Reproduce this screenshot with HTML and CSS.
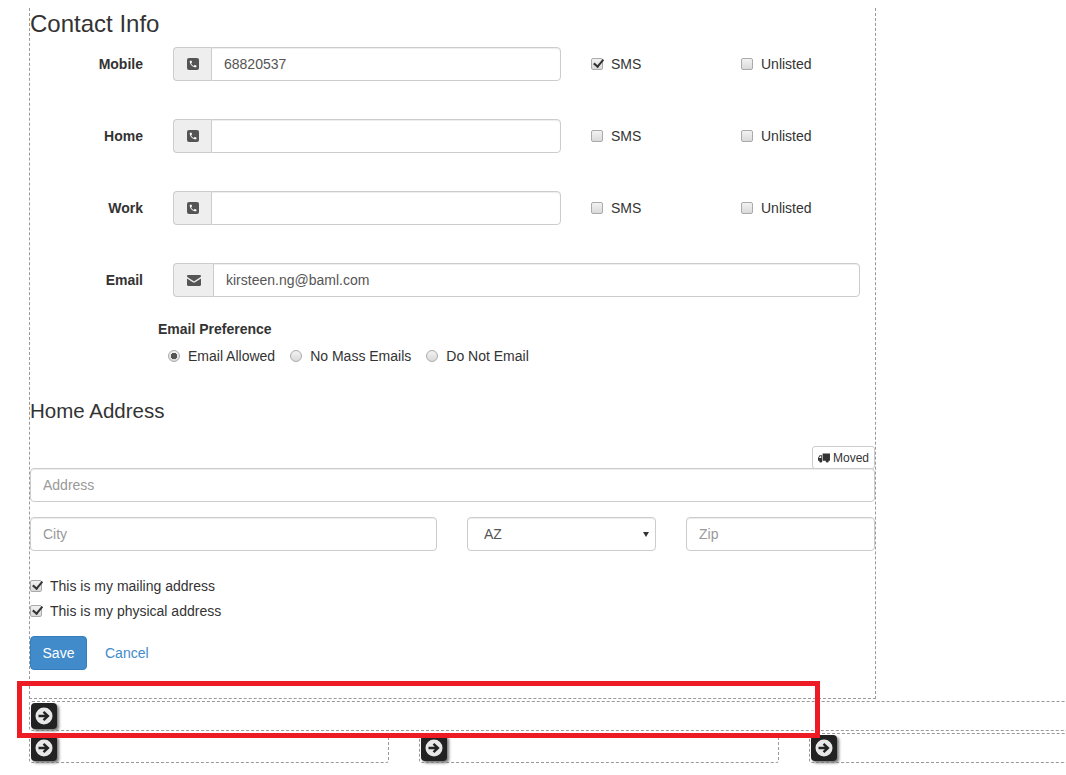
FILE: index.html
```html
<!DOCTYPE html>
<html lang="en">
<head>
<meta charset="utf-8">
<title>Contact Info</title>
<link rel="stylesheet" href="styles.css">
</head>
<body>
<svg class="defs" width="0" height="0" aria-hidden="true">
  <defs>
    <symbol id="phone" viewBox="0 0 12 12">
      <rect width="12" height="12" rx="2" fill="#555"/>
      <path transform="translate(1.6 1.6) scale(.37)" fill="#fff" d="M6.62 10.79c1.44 2.83 3.76 5.14 6.59 6.59l2.2-2.2c.27-.27.67-.36 1.02-.24 1.12.37 2.33.57 3.57.57.55 0 1 .45 1 1V20c0 .55-.45 1-1 1-9.39 0-17-7.61-17-17 0-.55.45-1 1-1h3.5c.55 0 1 .45 1 1 0 1.25.2 2.45.57 3.57.11.35.03.74-.25 1.02l-2.2 2.2z"/>
    </symbol>
    <symbol id="go" viewBox="0 0 26 26">
      <circle cx="13" cy="13" r="8.5" fill="#e8e8e8"/>
      <path d="M7.5 13h9M12.5 8.8l4.4 4.2-4.4 4.2" fill="none" stroke="#222" stroke-width="2.4"/>
    </symbol>
  </defs>
</svg>

<main class="panel">
  <h2 class="title">Contact Info</h2>

  <div class="contact-row">
    <label class="row-label">Mobile</label>
    <div class="group"><span class="addon"><svg class="ico"><use href="#phone"/></svg></span><input class="control joined" value="68820537"></div>
    <label class="check check-wide"><input type="checkbox" checked>SMS</label>
    <label class="check"><input type="checkbox">Unlisted</label>
  </div>
  <div class="contact-row">
    <label class="row-label">Home</label>
    <div class="group"><span class="addon"><svg class="ico"><use href="#phone"/></svg></span><input class="control joined"></div>
    <label class="check check-wide"><input type="checkbox">SMS</label>
    <label class="check"><input type="checkbox">Unlisted</label>
  </div>
  <div class="contact-row">
    <label class="row-label">Work</label>
    <div class="group"><span class="addon"><svg class="ico"><use href="#phone"/></svg></span><input class="control joined"></div>
    <label class="check check-wide"><input type="checkbox">SMS</label>
    <label class="check"><input type="checkbox">Unlisted</label>
  </div>
  <div class="contact-row email-row">
    <label class="row-label">Email</label>
    <div class="group group-wide"><span class="addon addon-wide"><svg class="ico-mail" viewBox="0 0 14 11"><path fill="#555" d="M1.2 0h11.6c.7 0 1.2.5 1.2 1.1 0 .5-.3.9-.7 1.2L7.6 6a1 1 0 0 1-1.2 0L.7 2.300C.3 2 0 1.600 0 1.100 0 .5.500 0 1.200 0zM0 3.400 5.800 7.200c.7.500 1.700.500 2.400 0L14 3.400v6.400c0 .7-.5 1.200-1.200 1.200H1.200C.5 11 0 10.500 0 9.800z"/></svg></span><input class="control joined" value="kirsteen.ng@baml.com"></div>
  </div>

  <div class="prefs">
    <div class="prefs-title">Email Preference</div>
    <div class="radios">
      <label class="radio"><input type="radio" name="pref" checked>Email Allowed</label>
      <label class="radio"><input type="radio" name="pref">No Mass Emails</label>
      <label class="radio"><input type="radio" name="pref">Do Not Email</label>
    </div>
  </div>

  <h3 class="subtitle">Home Address</h3>
  <div class="moved-bar">
    <button class="moved" type="button"><svg class="ico-truck" viewBox="0 0 13 10"><path fill="#333" d="M5 0h8v8H5zM4.300 2v6H0V5l1.700-3zM1 5h2.500V3H2.200z" fill-rule="evenodd"/><circle cx="3" cy="8.300" r="1.700" fill="#333"/><circle cx="10" cy="8.300" r="1.700" fill="#333"/></svg> Moved</button>
  </div>
  <input class="control full" placeholder="Address">
  <div class="city-grid">
    <input class="control" placeholder="City">
    <div class="select-wrap"><select class="control select"><option>AZ</option></select></div>
    <input class="control" placeholder="Zip">
  </div>
  <label class="address-check first"><input type="checkbox" checked>This is my mailing address</label>
  <label class="address-check"><input type="checkbox" checked>This is my physical address</label>
  <div class="actions">
    <button class="save" type="button">Save</button>
    <a class="cancel" href="#">Cancel</a>
  </div>
</main>

<section class="strip">
  <svg class="go-btn"><use href="#go"/></svg>
</section>
<section class="columns">
  <div class="col"><svg class="go-btn"><use href="#go"/></svg></div>
  <div class="col"><svg class="go-btn"><use href="#go"/></svg></div>
  <div class="col"><svg class="go-btn"><use href="#go"/></svg></div>
</section>

<div class="highlight"></div>
</body>
</html>
```

FILE: styles.css
```css
* { box-sizing: border-box; }
html, body { margin: 0; padding: 0; overflow: hidden; height: 775px; background: #fff; }
body {
  position: relative;
  font-family: "Liberation Sans", Arial, sans-serif;
  font-size: 14px;
  line-height: 20px;
  color: #333;
}
.defs { position: absolute; }

.panel {
  width: 847px;
  height: 691px;
  margin-left: 29px;
  border: 1px dashed #999;
  border-top: 0;
}
.title {
  margin: 8px 0 7px;
  font-size: 24px;
  font-weight: 400;
  line-height: 32px;
}
.contact-row { display: flex; align-items: center; height: 34px; margin-bottom: 38px; }
.email-row { margin-bottom: 22px; }
.row-label { width: 113px; margin-right: 30px; text-align: right; font-weight: 700; }

.group { display: flex; width: 388px; height: 34px; }
.group-wide { width: 687px; }
.addon {
  display: flex;
  align-items: center;
  justify-content: center;
  flex: 0 0 38px;
  background: #eee;
  border: 1px solid #ccc;
  border-right: 0;
  border-radius: 4px 0 0 4px;
}
.addon-wide { flex-basis: 40px; }
.ico { width: 12px; height: 12px; }
.ico-mail { width: 14px; height: 11px; }

.control {
  display: block;
  width: 100%;
  height: 34px;
  padding: 6px 12px;
  font: inherit;
  color: #555;
  background: #fff;
  border: 1px solid #ccc;
  border-radius: 4px;
  box-shadow: inset 0 1px 1px rgba(0, 0, 0, .075);
  outline: 0;
}
.control::placeholder { color: #999; opacity: 1; }
.joined { border-radius: 0 4px 4px 0; }

input[type="checkbox"], input[type="radio"] {
  appearance: none;
  position: relative;
  flex: none;
  width: 12px;
  height: 12px;
  margin: 0 8px 0 0;
  border: 1px solid #aaa;
  background: linear-gradient(#f2f2f2, #d9d9d9);
}
input[type="checkbox"] { border-radius: 2px; }
input[type="checkbox"]:checked::before {
  content: "";
  position: absolute;
  left: 1px;
  top: 1px;
  width: 8px;
  height: 4px;
  border-left: 2px solid #333;
  border-bottom: 2px solid #333;
  transform: rotate(-50deg) translate(1px, 0);
}
input[type="radio"] { border-radius: 50%; }
input[type="radio"]:checked { background: radial-gradient(circle, #555 0 3px, transparent 3.5px), linear-gradient(#f2f2f2, #d9d9d9); }

.check { display: flex; align-items: center; }
.check-wide { width: 150px; margin-left: 30px; }

.prefs { padding-left: 128px; }
.prefs-title { font-weight: 700; }
.radios { display: flex; gap: 15px; margin: 7px 0 0 10px; }
.radio { display: flex; align-items: center; }

.subtitle { margin: 30px 0 0; font-size: 20.500px; font-weight: 400; line-height: 30px; }
.moved-bar { display: flex; justify-content: flex-end; margin-top: 20px; }
.moved {
  display: flex;
  align-items: center;
  gap: 3px;
  width: 63px;
  height: 23px;
  margin-bottom: -1px;
  padding: 0 5px;
  font: inherit;
  font-size: 12px;
  color: #333;
  background: #fff;
  border: 1px solid #ccc;
  border-radius: 3px;
}
.ico-truck { width: 13px; height: 10px; }
.city-grid { display: grid; grid-template-columns: 407px 189px 189px; gap: 30px; margin-top: 15px; }
.select-wrap { position: relative; }
.select { appearance: none; padding-left: 16px; }
.select-wrap::after {
  content: "";
  position: absolute;
  right: 7px;
  top: 15px;
  border: 3px solid transparent;
  border-top: 5px solid #333;
  border-bottom: 0;
}
.address-check { display: flex; align-items: center; margin-top: 5px; }
.address-check.first { margin-top: 25px; }
.actions { display: flex; align-items: center; gap: 18px; margin-top: 15px; }
.save {
  width: 57px;
  height: 34px;
  padding: 0;
  font: inherit;
  color: #fff;
  background: #428bca;
  border: 1px solid #357ebd;
  border-radius: 4px;
}
.cancel { color: #428bca; text-decoration: none; }

.strip, .col {
  position: relative;
  height: 30px;
  border: 1px dashed #999;
  border-radius: 3px;
}
.strip { width: 1100px; margin: 2px 0 0 29px; }
.columns { display: grid; grid-template-columns: 360px 360px 360px; gap: 30px; width: 1140px; margin: 2px 0 0 29px; }
.go-btn {
  position: absolute;
  left: 1px;
  top: 1px;
  width: 26px;
  height: 26px;
  background: #222;
  border-radius: 4px;
  box-shadow: 2px 2px 3px #777;
}

.highlight {
  position: absolute;
  left: 17px;
  top: 681px;
  width: 803px;
  height: 57px;
  border: 5px solid #ed1c24;
}
```
